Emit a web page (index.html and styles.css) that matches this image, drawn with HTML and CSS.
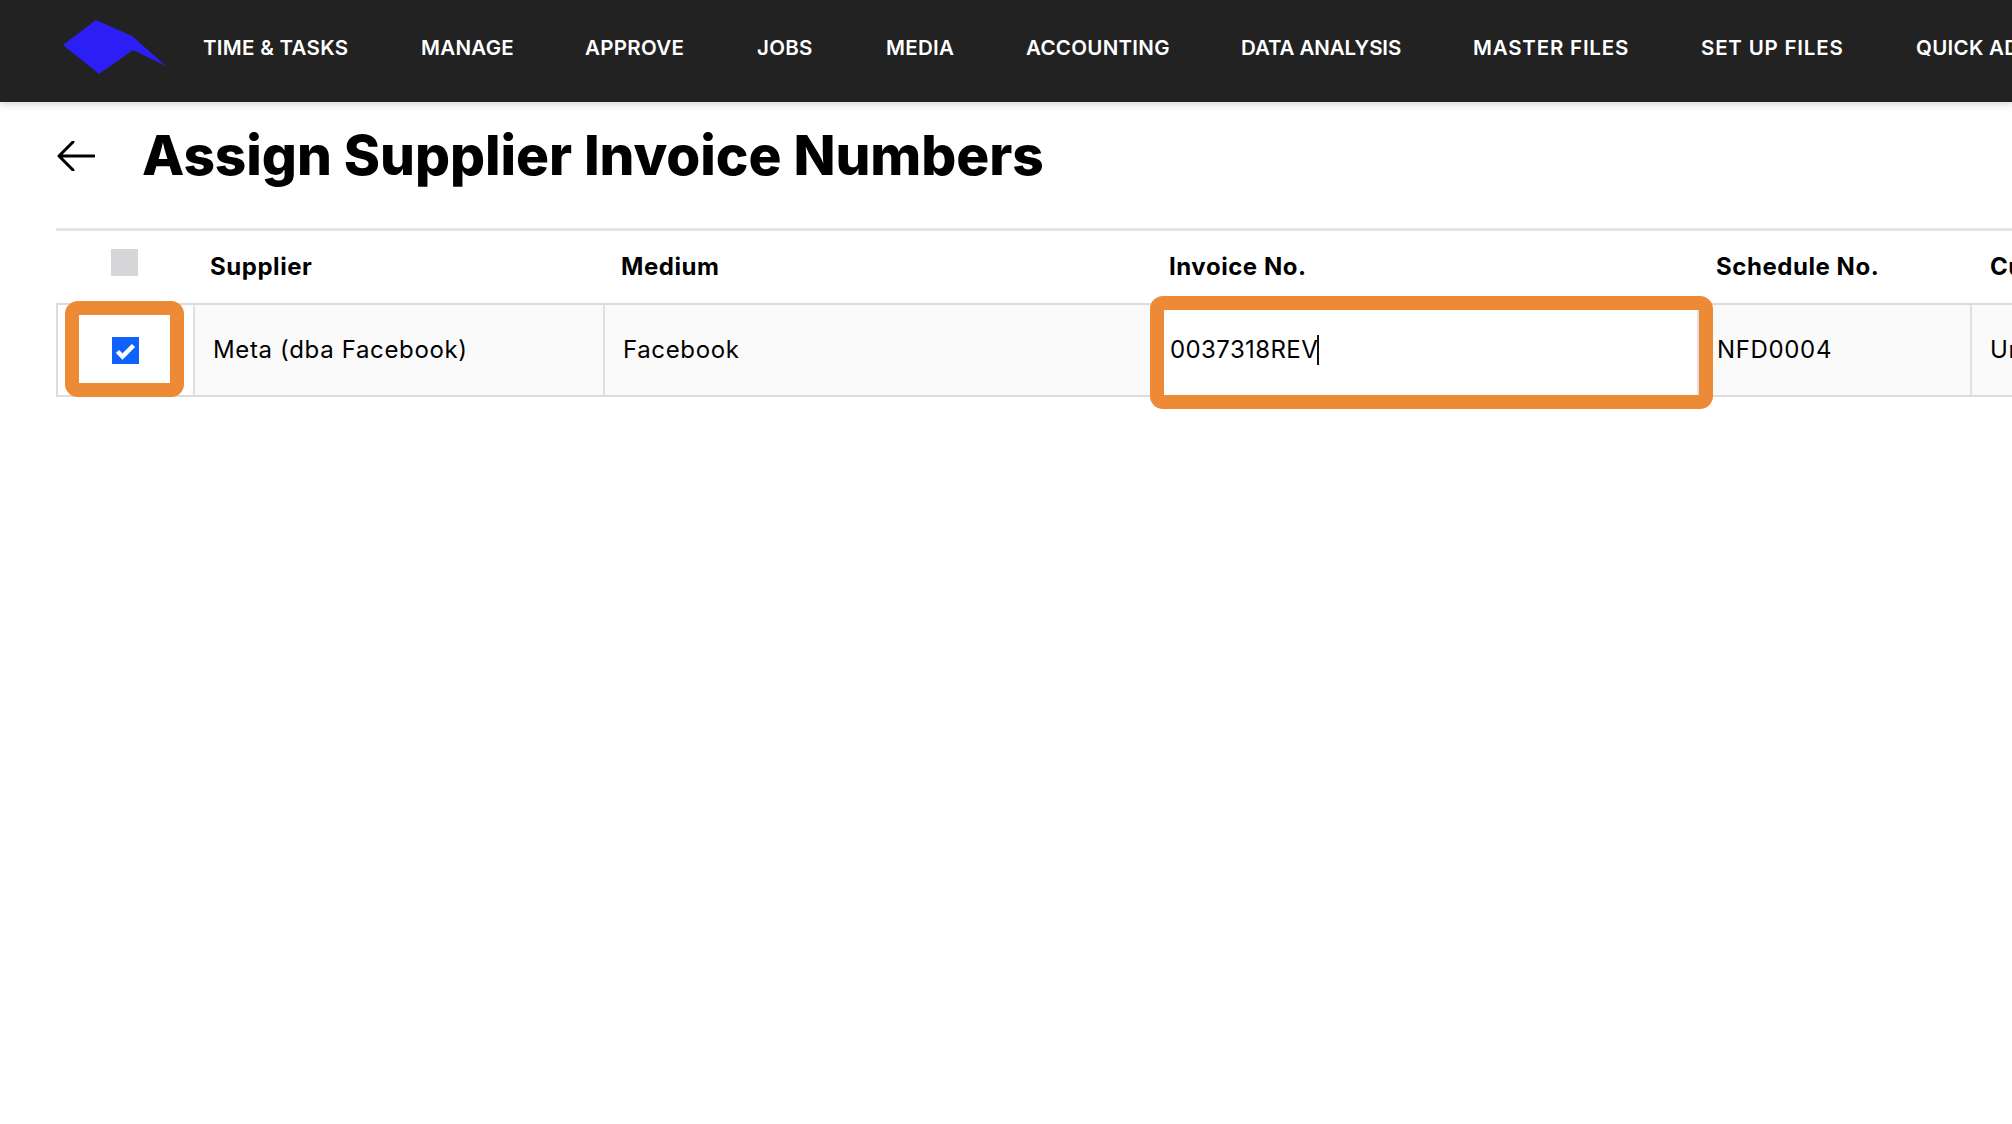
FILE: index.html
```html
<!DOCTYPE html>
<html lang="en">
<head>
<meta charset="utf-8">
<title>Assign Supplier Invoice Numbers</title>
<link rel="stylesheet" href="styles.css">
</head>
<body>
<header class="topbar">
  <svg class="logo" viewBox="0 0 110 60" width="110" height="60" aria-hidden="true"><polygon points="3,27 36,2 72,18 106,48 73,32 39,56" fill="#2b1ff5"/></svg>
  <nav class="nav">
    <a>TIME &amp; TASKS</a><a>MANAGE</a><a>APPROVE</a><a>JOBS</a><a>MEDIA</a><a>ACCOUNTING</a><a class="tight">DATA ANALYSIS</a><a class="wide">MASTER FILES</a><a class="wide">SET UP FILES</a><a>QUICK ADD</a>
  </nav>
</header>
<main class="page">
  <div class="title-row">
    <svg class="back" viewBox="0 0 38 30" width="38" height="30" aria-hidden="true"><path d="M37 15H2M16 1 2 15l14 14" fill="none" stroke="#000" stroke-width="3" stroke-linecap="round" stroke-linejoin="round"/></svg>
    <h1>Assign Supplier Invoice Numbers</h1>
  </div>
  <div class="table">
    <div class="head">
      <div class="th th-check"><span class="box"></span></div>
      <div class="th">Supplier</div>
      <div class="th">Medium</div>
      <div class="th">Invoice No.</div>
      <div class="th">Schedule No.</div>
      <div class="th">Currency</div>
    </div>
    <div class="row">
      <div class="td td-check"><span class="box checked"><svg viewBox="0 0 27 27" width="27" height="27" aria-hidden="true"><path d="M5.5 14.5l5 5 11-11" fill="none" stroke="#fff" stroke-width="4.5"/></svg></span></div>
      <div class="td">Meta (dba Facebook)</div>
      <div class="td">Facebook</div>
      <div class="td td-input"><span>0037318REV</span><i class="caret"></i></div>
      <div class="td">NFD0004</div>
      <div class="td">Unposted</div>
    </div>
  </div>
  <div class="mark mark-check"></div>
  <div class="mark mark-input"></div>
</main>
</body>
</html>
```
FILE: styles.css
```css
* { box-sizing: border-box; }
html, body { margin: 0; height: 100%; overflow: hidden; background: #fff; }
body { font-family: Inter, "Liberation Sans", sans-serif; color: #000; }

.topbar {
  height: 102px; background: #222; display: flex; align-items: center;
  padding: 0 0 0 60px; box-shadow: 0 2px 7px rgba(0,0,0,.18); white-space: nowrap;
  position: relative;
}
.logo { flex: none; margin-top: -6px; }
.nav {
  display: grid; grid-template-columns: 218px 164px 172px 129px 140px 215px 232px 228px 215px auto;
  margin-left: 33px; margin-top: -8px;
}
.nav a { color: #fff; font-size: 20.5px; font-weight: 600; letter-spacing: .3px; }
.nav a.wide { letter-spacing: .8px; }
.nav a.tight { letter-spacing: -.1px; }

.page { position: relative; padding-left: 56px; }
.title-row { height: 126px; display: flex; align-items: center; padding-bottom: 20px; }
.back { flex: none; margin: 1px 0 0 1px; }
.title-row h1 { margin: 0 0 0 47px; font-size: 55px; font-weight: 800; line-height: 64px; white-space: nowrap; letter-spacing: -.06px; }

.table { width: 2200px; border-top: 3px solid #e3e5e5; }
.head { display: grid; grid-template-columns: 138px 411px 548px 547px 274px 284px; height: 72px; }
.row { display: grid; grid-template-columns: 137px 410px 547px 547px 273px 284px; height: 94px; border: solid #dcdcdc; border-width: 2px 0 2px 2px; background: #fafafa; }
.th { font-size: 24px; font-weight: 700; padding: 22px 0 0 16px; line-height: 28px; letter-spacing: .55px; }
.th-check { padding: 18px 0 0 55px; }
.box { display: block; width: 27px; height: 27px; background: #d6d6d8; }
.box.checked { background: #0f62fe; }
.box svg { display: block; }
.td { font-size: 24px; line-height: 28px; letter-spacing: .65px; display: flex; align-items: center; padding-left: 18px; border-right: 2px solid #e0e0e0; white-space: nowrap; }
.td-check { background: #fff; padding-left: 54px; }
.td-input { background: #fff; letter-spacing: .4px; }
.caret { width: 2px; height: 30px; background: #111; margin-left: -1px; }

.mark { position: absolute; border: 14px solid #ec8a36; border-radius: 13px; }
.mark-check { left: 65px; top: 199px; width: 119px; height: 96px; }
.mark-input { left: 1150px; top: 194px; width: 563px; height: 113px; }
```
